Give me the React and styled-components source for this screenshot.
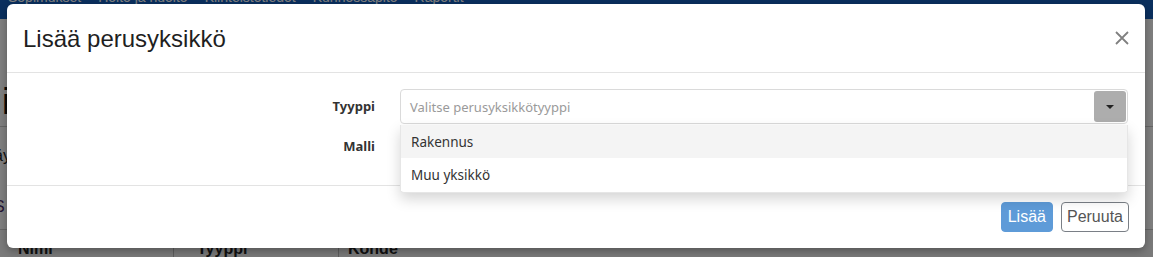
import React from 'react';
import styled, { createGlobalStyle } from 'styled-components';

/********************************************** Styles ********************************************/
const GlobalStyle = createGlobalStyle`
  html, body {
    margin: 0;
    padding: 0;
    width: 1153px;
    height: 257px;
    overflow: hidden;
    background: #fff;
  }
  * {
    box-sizing: border-box;
  }
`;

const SegoeStack = `"Segoe UI", "Noto Sans", Lato, sans-serif`;
const ArialStack = `"Liberation Sans", Arial, sans-serif`;

// page behind the backdrop
const DivPage = styled.div`
  position: relative;
  width: 1153px;
  height: 257px;
  overflow: hidden;
  font-family: ${ArialStack};
`;

const Nav = styled.nav`
  display: flex;
  gap: 17px;
  height: 19px;
  padding-left: 8px;
  background: #16609f;
  background: #145fbd;
  overflow: hidden;
`;

const NavLink = styled.span`
  color: #fff;
  font-size: 14px;
  line-height: 14px;
  margin-top: -10px;
  white-space: nowrap;
`;

const DivContent = styled.div`
  display: flex;
  flex-direction: column;
`;

const H1Page = styled.h1`
  margin: 0;
  padding: 62px 0 0 0;
  height: 108px;
  font-size: 36px;
  font-weight: 500;
  color: #111;
  border-bottom: 1px solid #ccc;
  text-indent: -6px;
`;

const DivPageRow = styled.div`
  height: ${p => p.h}px;
  font-size: 16px;
  color: ${p => p.color || '#222'};
  display: flex;
  align-items: center;
  border-bottom: ${p => (p.line ? '1px solid #ccc' : 'none')};
  text-indent: -6px;
`;

const DivTableHead = styled.div`
  display: grid;
  grid-template-columns: 173px 15px 150px 1fr;
  height: 30px;
  font-size: 16px;
  font-weight: 700;
  color: #222;
  background: #f4f4f4;
`;

const SpanHeadCell = styled.span`
  padding: 10px 0 0 ${p => p.pad || 10}px;
  border-left: ${p => (p.sep ? '1px solid #bbb' : 'none')};
`;

const Backdrop = styled.div`
  position: absolute;
  inset: 0;
  background: rgba(0, 0, 0, 0.5);
`;

// modal
const DivModal = styled.div`
  position: absolute;
  top: 4px;
  left: 7px;
  width: 1138px;
  height: 244px;
  display: flex;
  flex-direction: column;
  background: #fff;
  border-radius: 6px;
  box-shadow: 0 3px 9px rgba(0, 0, 0, 0.3);
`;

const DivHeader = styled.div`
  display: flex;
  justify-content: space-between;
  align-items: flex-start;
  padding: 21px 16px 20px 16px;
  border-bottom: 1px solid #e3e3e3;
`;

const H4Title = styled.h4`
  margin: 0;
  font-family: ${ArialStack};
  font-size: 24px;
  font-weight: 400;
  line-height: 27px;
  color: #1f1f1f;
`;

const ButtonClose = styled.button`
  display: flex;
  padding: 0;
  margin-top: 6px;
  border: none;
  background: none;
  color: #808080;
  cursor: pointer;
`;

const FormBody = styled.div`
  display: grid;
  grid-template-columns: 352px 1fr;
  column-gap: 25px;
  row-gap: 5px;
  padding: 16px 17px 20px 16px;
  font-family: ${SegoeStack};
  font-size: 13px;
`;

const LabelField = styled.label`
  text-align: right;
  font-weight: 700;
  color: #333;
  padding-top: 8px;
  line-height: 18px;
`;

const DivSelectWrap = styled.div`
  position: relative;
`;

const DivSelect = styled.div`
  display: flex;
  align-items: center;
  justify-content: space-between;
  height: 35px;
  padding: 1px 1px 1px 9px;
  border: 1px solid #dadada;
  border-radius: 4px;
  background: #fff;
`;

const SpanPlaceholder = styled.span`
  color: #9a9a9a;
`;

const SpanArrowBox = styled.span`
  display: flex;
  align-items: center;
  justify-content: center;
  width: 32px;
  height: 31px;
  border-radius: 3px;
  background: #adadad;
`;

const SpanCaret = styled.span`
  width: 0;
  height: 0;
  border-left: 4px solid transparent;
  border-right: 4px solid transparent;
  border-top: 4px solid #222;
  margin-top: 1px;
`;

const UlMenu = styled.ul`
  position: absolute;
  top: 36px;
  left: 0;
  right: 0;
  z-index: 5;
  margin: 0;
  padding: 0 0 1px 0;
  list-style: none;
  background: #fff;
  border: 1px solid #e6e6e6;
  border-top: none;
  border-radius: 0 0 4px 4px;
  box-shadow: 0 6px 14px rgba(0, 0, 0, 0.17);
`;

const LiOption = styled.li`
  height: 33px;
  display: flex;
  align-items: center;
  padding-left: 10px;
  font-size: 13.5px;
  color: #333;
  background: ${p => (p.active ? '#f4f4f4' : '#fff')};
`;

const DivFooter = styled.div`
  display: flex;
  justify-content: flex-end;
  gap: 8px;
  margin-top: auto;
  padding: 16px;
  border-top: 1px solid #e3e3e3;
`;

const Button = styled.button`
  height: 30px;
  padding: 0 ${p => (p.primary ? 6 : 5)}px;
  font-family: ${ArialStack};
  font-size: 16px;
  border-radius: 4px;
  border: 1px solid ${p => (p.primary ? '#5e9bd8' : '#7a7f86')};
  background: ${p => (p.primary ? '#5e9bd8' : '#fff')};
  color: ${p => (p.primary ? '#fff' : '#555')};
  cursor: pointer;
`;

/********************************************* Component ******************************************/
const CloseIcon = () => (
  <svg width="14" height="14" viewBox="0 0 14 14">
    <path d="M1 1 L13 13 M13 1 L1 13" stroke="currentColor" strokeWidth="1.8" fill="none" />
  </svg>
);

const SelectBox = ({ placeholder, children }) => (
  <DivSelectWrap>
    <DivSelect>
      <SpanPlaceholder>{placeholder}</SpanPlaceholder>
      <SpanArrowBox><SpanCaret /></SpanArrowBox>
    </DivSelect>
    {children}
  </DivSelectWrap>
);

const App = () => {
  return (
    <DivPage>
      <GlobalStyle />
      <Nav>
        <NavLink>Sopimukset</NavLink>
        <NavLink>Hoito ja huolto</NavLink>
        <NavLink>Kiinteistötiedot</NavLink>
        <NavLink>Kunnossapito</NavLink>
        <NavLink>Raportit</NavLink>
      </Nav>
      <DivContent>
        <H1Page>ii</H1Page>
        <DivPageRow h={58}>äy</DivPageRow>
        <DivPageRow h={45} color="#4a2a6a" line>S 1</DivPageRow>
        <DivTableHead>
          <SpanHeadCell pad={18}>Nimi</SpanHeadCell>
          <SpanHeadCell sep pad={0} />
          <SpanHeadCell pad={9}>Tyyppi</SpanHeadCell>
          <SpanHeadCell sep pad={9}>Kohde</SpanHeadCell>
        </DivTableHead>
      </DivContent>
      <Backdrop />

      <DivModal>
        <DivHeader>
          <H4Title>Lisää perusyksikkö</H4Title>
          <ButtonClose aria-label="Sulje"><CloseIcon /></ButtonClose>
        </DivHeader>
        <FormBody>
          <LabelField>Tyyppi</LabelField>
          <SelectBox placeholder="Valitse perusyksikkötyyppi">
            <UlMenu>
              <LiOption active>Rakennus</LiOption>
              <LiOption>Muu yksikkö</LiOption>
            </UlMenu>
          </SelectBox>
          <LabelField>Malli</LabelField>
          <SelectBox placeholder="" />
        </FormBody>
        <DivFooter>
          <Button primary>Lisää</Button>
          <Button>Peruuta</Button>
        </DivFooter>
      </DivModal>
    </DivPage>
  );
};

export default App;
